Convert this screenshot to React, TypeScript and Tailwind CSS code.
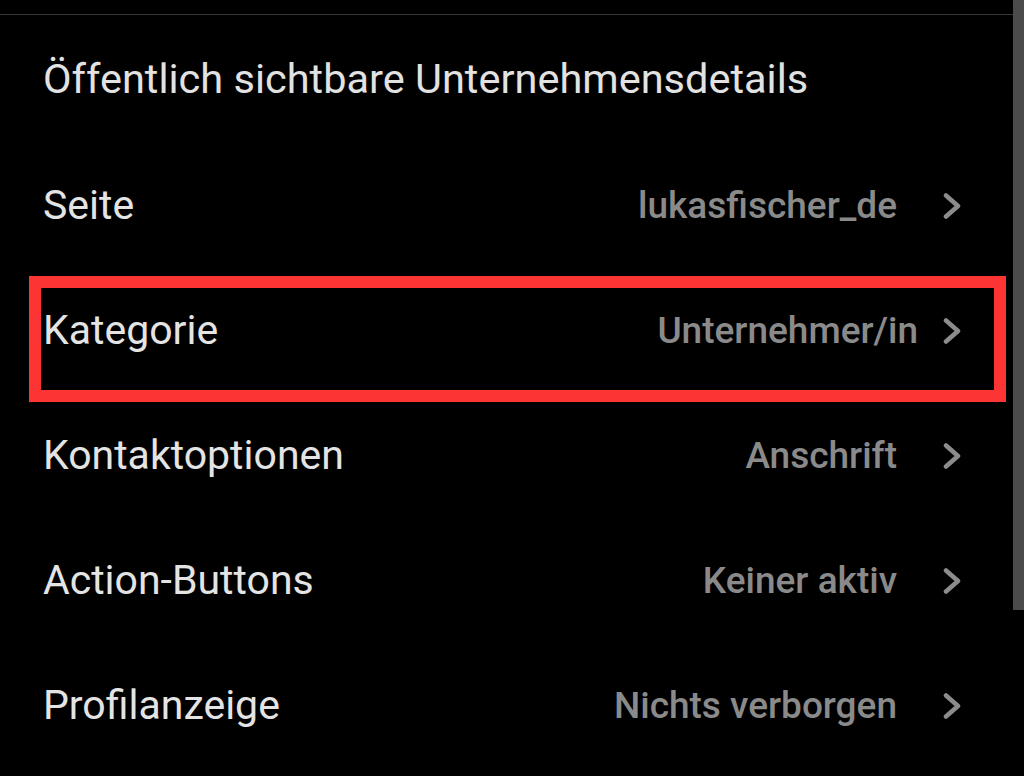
const rows = [
  { label: "Seite", value: "lukasfischer_de" },
  { label: "Kategorie", value: "Unternehmer/in", highlighted: true },
  { label: "Kontaktoptionen", value: "Anschrift" },
  { label: "Action-Buttons", value: "Keiner aktiv" },
  { label: "Profilanzeige", value: "Nichts verborgen" },
];

function Chevron() {
  return (
    <svg width="18" height="26" viewBox="0 0 18 26" fill="none" className="shrink-0">
      <path d="M3 2.5l12 10.5L3 23.5" stroke="#8c8c8c" strokeWidth="4.5" strokeLinecap="round" strokeLinejoin="round" />
    </svg>
  );
}

export default function App() {
  return (
    <div className="flex h-[776px] w-[1024px] overflow-hidden bg-black font-['Roboto',sans-serif]">
      <div className="flex-1">
        <div className="h-[14px]" />
        <div className="h-px bg-[#363636]" />

        {/* section heading */}
        <div className="flex h-[128px] items-center px-[43px]">
          <h2 className="text-[41.5px] font-normal text-[#e2e2e2]">
            Öffentlich sichtbare Unternehmensdetails
          </h2>
        </div>

        {rows.map((row) => (
          <div key={row.label} className="relative flex h-[125px] items-center pl-[43px] pr-[52px]">
            <span className="flex-1 text-[41px] text-[#e4e4e4]">{row.label}</span>
            <span
              className={
                row.highlighted
                  ? "mr-[25px] text-[37px] font-medium text-[#8a8a8a]"
                  : "mr-[46px] text-[37px] font-medium text-[#8a8a8a]"
              }
            >
              {row.value}
            </span>
            <Chevron />
            {row.highlighted && (
              <div className="pointer-events-none absolute left-[29px] right-[7px] top-[8px] h-[126px] border-[12px] border-[#fc3434]" />
            )}
          </div>
        ))}
      </div>

      {/* scrollbar */}
      <div className="w-[11px]">
        <div className="h-[610px] bg-[#4b4b4b]" />
      </div>
    </div>
  );
}
